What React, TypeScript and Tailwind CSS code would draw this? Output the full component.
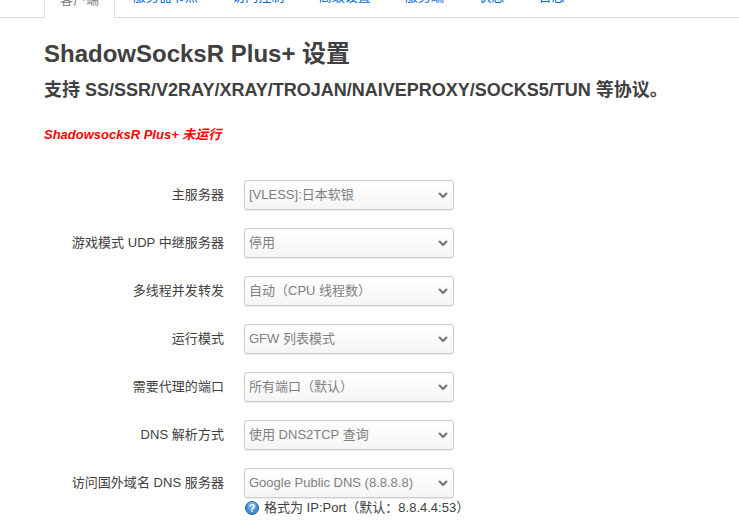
const font = "font-['Liberation_Sans','Noto_Sans_CJK_SC',sans-serif]";

const tabs = ['服务器节点', '访问控制', '高级设置', '服务端', '状态', '日志'];

const rows = [
  { label: '主服务器', value: '[VLESS]:日本软银' },
  { label: '游戏模式 UDP 中继服务器', value: '停用' },
  { label: '多线程并发转发', value: '自动（CPU 线程数）' },
  { label: '运行模式', value: 'GFW 列表模式' },
  { label: '需要代理的端口', value: '所有端口（默认）' },
  { label: 'DNS 解析方式', value: '使用 DNS2TCP 查询' },
  { label: '访问国外域名 DNS 服务器', value: 'Google Public DNS (8.8.8.8)' },
];

function FakeSelect({ value }: { value: string }) {
  return (
    <div className="flex h-[30px] w-[210px] items-center justify-between rounded-[3px] border border-[#cccccc] bg-gradient-to-b from-white to-[#f5f5f5] pl-[4px] pr-[5px] text-[13px] text-[#808080] shadow-[0_1px_1px_rgba(0,0,0,0.08)]">
      <span className="whitespace-nowrap">{value}</span>
      <svg width="10" height="6" viewBox="0 0 10 6">
        <path d="M1 1 L5 5 L9 1" fill="none" stroke="#707070" strokeWidth="2" />
      </svg>
    </div>
  );
}

export default function App() {
  return (
    <div className={`${font} h-[532px] w-[739px] overflow-hidden bg-white text-[#404040]`}>
      <div className="flex h-[18px] items-end border-b border-[#dddddd] pl-[44px]">
        <div className="-mb-px flex h-[18px] w-[71px] items-end justify-center overflow-hidden border-x border-[#dddddd] bg-white text-[13px] leading-[18px] text-[#808080]">
          <span className="mb-[9px]">客户端</span>
        </div>
        <div className="flex h-[18px] overflow-hidden pl-[18px] text-[13px] text-[#0069d6]">
          {tabs.map((t) => (
            <span key={t} className="mr-[34.3px] mt-[-11px] whitespace-nowrap leading-[18px]">
              {t}
            </span>
          ))}
        </div>
      </div>

      <div className="pl-[44px]">
        <h1 className="mt-[21px] text-[24px] font-bold leading-[30px] text-[#404040]">ShadowSocksR Plus+ 设置</h1>
        <h2 className="mt-[9px] text-[18px] font-bold leading-[24px] text-[#404040]">
          支持 SS/SSR/V2RAY/XRAY/TROJAN/NAIVEPROXY/SOCKS5/TUN 等协议。
        </h2>
        <p className="mt-[24px] text-[13px] font-bold italic leading-[18px] text-[#ff0000]">ShadowsocksR Plus+ 未运行</p>
      </div>

      <div className="mt-[36px] flex flex-col gap-[18px]">
        {rows.map((r) => (
          <div key={r.label} className="flex items-center">
            <label className="w-[224px] shrink-0 text-right text-[13px] tracking-[0.05px] text-[#404040]">{r.label}</label>
            <div className="ml-[20px]">
              <FakeSelect value={r.value} />
            </div>
          </div>
        ))}
      </div>

      <div className="ml-[245px] mt-[1px] flex items-center gap-[5px] text-[13px] leading-[18px] text-[#404040]">
        <svg width="14" height="14" viewBox="0 0 14 14">
          <circle cx="7" cy="7" r="6.5" fill="#3f8ccf" stroke="#1f5f96" />
          <circle cx="7" cy="5" r="4.5" fill="#8fc2ea" opacity="0.6" />
          <text x="7" y="10.5" textAnchor="middle" fontSize="10" fontWeight="bold" fill="#ffffff">?</text>
        </svg>
        <span className="whitespace-nowrap">格式为 IP:Port（默认：8.8.4.4:53）</span>
      </div>
    </div>
  );
}
